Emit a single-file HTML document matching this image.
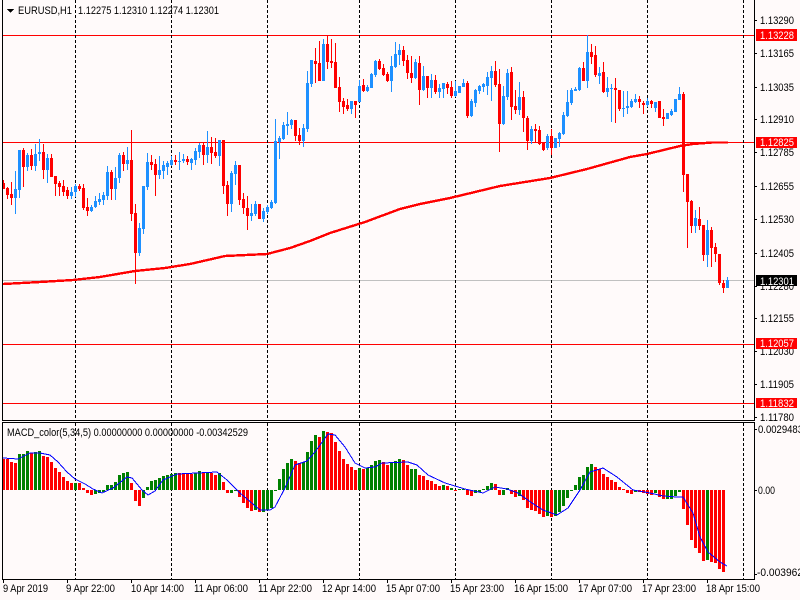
<!DOCTYPE html>
<html>
<head>
<meta charset="utf-8">
<title>EURUSD,H1</title>
<style>
html,body{margin:0;padding:0;background:#fffafa;width:800px;height:600px;overflow:hidden}
svg{display:block;position:absolute;left:0;top:0}
text{font-family:"Liberation Sans",sans-serif;font-size:11px;fill:#000}
</style>
</head>
<body>
<svg width="800" height="600" viewBox="0 0 800 600" xmlns="http://www.w3.org/2000/svg" shape-rendering="crispEdges">
<rect width="800" height="600" fill="#fffafa"/>

<!-- horizontal lines -->
<path d="M3 35.5H754M3 142.5H754M3 344.5H754M3 403.5H754" stroke="#ff0000" stroke-width="1" fill="none"/>
<path d="M3 280.5H754" stroke="#c0c0c0" stroke-width="1" fill="none"/>

<!-- vertical dashed separators -->
<path d="M75.5 0V420M171.5 0V420M267.5 0V420M359.5 0V420M455.5 0V420M551.5 0V420M647.5 0V420M743.5 0V420M75.5 423V579M171.5 423V579M267.5 423V579M359.5 423V579M455.5 423V579M551.5 423V579M647.5 423V579M743.5 423V579" stroke="#000" stroke-width="1" stroke-dasharray="3 2" fill="none"/>

<!-- blue wicks -->
<path fill="none" stroke="#1e90ff" stroke-width="1" d="M15.5 171V214M19.5 150V198M27.5 153V171M35.5 144V171M39.5 139V161M47.5 154V183M71.5 187V199M75.5 184V197M91.5 205V212M95.5 196V208M99.5 193V205M103.5 192V205M107.5 166V200M115.5 167V200M119.5 153V183M127.5 147V170M139.5 223V256M143.5 186V234M147.5 153V190M159.5 156V179M163.5 161V179M167.5 161V175M171.5 156V166M179.5 152V170M183.5 154V163M191.5 158V170M195.5 148V165M199.5 143V158M207.5 131V163M219.5 140V166M231.5 171V212M235.5 161V185M251.5 204V221M255.5 201V216M263.5 208V222M267.5 205V214M271.5 200V209M275.5 119V204M279.5 136V159M283.5 122V140M287.5 112V135M291.5 119V129M303.5 124V147M307.5 71V132M311.5 60V87M323.5 39V81M351.5 101V114M359.5 80V102M367.5 85V92M371.5 73V88M375.5 60V77M391.5 56V92M395.5 42V68M399.5 44V65M415.5 59V79M423.5 66V91M431.5 74V98M439.5 84V98M443.5 83V98M455.5 81V97M459.5 86V93M463.5 79V87M471.5 99V117M475.5 89V107M479.5 85V94M483.5 83V92M487.5 72V95M491.5 66V101M503.5 86V125M507.5 69V100M519.5 82V115M531.5 126V144M547.5 134V150M555.5 138V148M559.5 132V147M563.5 112V135M567.5 90V117M571.5 88V105M575.5 87V91M579.5 67V91M587.5 35V88M599.5 67V84M607.5 77V97M611.5 84V122M623.5 91V117M627.5 91V114M631.5 99V108M635.5 94V103M647.5 98V107M655.5 102V112M667.5 113V119M671.5 109V116M675.5 99V112M679.5 87V100M695.5 210V233M707.5 220V267M727.5 277V288"/>
<!-- blue bodies -->
<path fill="none" stroke="#1e90ff" stroke-width="3" d="M15.5 189V198M19.5 150V190M27.5 155V167M35.5 154V166M39.5 152V154M47.5 158V170M71.5 192V196M75.5 186V192M91.5 207V211M95.5 201V207M99.5 199V202M103.5 195V200M107.5 172V196M115.5 178V189M119.5 155V178M127.5 160V164M139.5 228V253M143.5 186V229M147.5 162V187M159.5 170V175M163.5 165V171M167.5 163V167M171.5 160V165M179.5 161V162M183.5 159V161M191.5 159V163M195.5 151V160M199.5 145V152M207.5 147V155M219.5 140V156M231.5 173V204M235.5 165V174M251.5 213V216M255.5 204V214M263.5 211V219M267.5 207V212M271.5 202V208M275.5 141V203M279.5 138V142M283.5 125V139M287.5 124V126M291.5 120V125M303.5 128V141M307.5 83V129M311.5 60V84M323.5 44V81M351.5 101V109M359.5 86V102M367.5 87V91M371.5 74V88M375.5 61V75M391.5 66V81M395.5 54V67M399.5 50V55M415.5 62V78M423.5 76V90M431.5 80V88M439.5 88V92M443.5 83V89M455.5 91V96M459.5 86V93M463.5 83V87M471.5 101V116M475.5 90V103M479.5 86V91M483.5 84V87M487.5 77V86M491.5 71V78M503.5 96V124M507.5 73V97M519.5 97V110M531.5 129V141M547.5 136V148M555.5 138V148M559.5 133V139M563.5 115V134M567.5 102V116M571.5 90V103M575.5 89V91M579.5 68V90M587.5 52V81M599.5 73V76M607.5 88V92M611.5 88V89M623.5 108V109M627.5 106V108M631.5 101V107M635.5 99V102M647.5 101V105M655.5 102V108M667.5 113V119M671.5 111V115M675.5 99V112M679.5 94V100M695.5 218V226M707.5 230V255M727.5 280V288"/>
<!-- red wicks -->
<path fill="none" stroke="#ff0000" stroke-width="1" d="M3.5 180V189M7.5 187V199M11.5 182V205M23.5 148V187M31.5 149V170M43.5 144V179M51.5 154V177M55.5 176V196M59.5 181V196M63.5 180V196M67.5 187V199M79.5 184V191M83.5 184V210M87.5 198V216M111.5 170V200M123.5 152V171M131.5 130V221M135.5 204V284M151.5 155V170M155.5 159V196M175.5 155V165M187.5 156V165M203.5 143V165M211.5 137V164M215.5 138V158M223.5 140V194M227.5 181V216M239.5 165V205M243.5 193V214M247.5 196V230M259.5 204V219M295.5 120V141M299.5 128V145M315.5 48V83M319.5 41V81M327.5 35V69M331.5 39V68M335.5 43V88M339.5 77V112M343.5 98V114M347.5 99V111M355.5 101V118M363.5 79V92M379.5 59V70M383.5 64V76M387.5 72V82M403.5 46V66M407.5 55V79M411.5 56V83M419.5 56V105M427.5 76V98M435.5 75V94M447.5 82V94M451.5 81V98M467.5 81V118M495.5 61V87M499.5 69V152M511.5 67V120M515.5 90V114M523.5 91V132M527.5 116V150M535.5 124V142M539.5 126V145M543.5 142V151M551.5 129V155M583.5 62V81M591.5 44V64M595.5 46V77M603.5 62V93M615.5 78V123M619.5 90V111M639.5 96V108M643.5 101V114M651.5 100V108M659.5 101V118M663.5 109V126M683.5 92V192M687.5 174V248M691.5 200V233M699.5 207V230M703.5 225V261M711.5 227V267M715.5 243V262M719.5 254V285M723.5 280V293"/>
<!-- red bodies -->
<path fill="none" stroke="#ff0000" stroke-width="3" d="M3.5 183V189M7.5 188V195M11.5 194V198M23.5 150V167M31.5 155V166M43.5 152V170M51.5 158V177M55.5 176V184M59.5 183V187M63.5 186V192M67.5 190V196M79.5 186V189M83.5 188V208M87.5 207V211M111.5 172V189M123.5 155V164M131.5 160V214M135.5 213V253M151.5 162V165M155.5 164V175M175.5 160V162M187.5 159V162M203.5 145V155M211.5 147V153M215.5 152V156M223.5 140V186M227.5 185V204M239.5 165V200M243.5 199V208M247.5 208V216M259.5 204V219M295.5 120V136M299.5 135V141M315.5 61V64M319.5 63V81M327.5 44V62M331.5 61V63M335.5 62V88M339.5 87V102M343.5 101V107M347.5 105V109M355.5 101V105M363.5 85V91M379.5 61V69M383.5 68V75M387.5 74V81M403.5 50V61M407.5 60V73M411.5 73V78M419.5 63V90M427.5 76V88M435.5 80V92M447.5 84V88M451.5 87V96M467.5 83V116M495.5 71V85M499.5 84V124M511.5 72V107M515.5 106V110M523.5 97V118M527.5 118V141M535.5 129V131M539.5 130V144M543.5 142V150M551.5 136V148M583.5 68V81M591.5 52V57M595.5 55V75M603.5 72V92M615.5 88V90M619.5 90V109M639.5 99V102M643.5 103V105M651.5 101V104M659.5 101V118M663.5 117V119M683.5 94V175M687.5 174V202M691.5 201V226M699.5 219V226M703.5 225V255M711.5 230V248M715.5 247V254M719.5 254V283M723.5 283V288"/>

<!-- moving average -->
<polyline fill="none" stroke="#ff0000" stroke-width="2.4" points="3,284 40,282 73,280 100,277 135,271 165,268 190,264 225,256 267,254 290,248 310,241 330,233 365,222 400,209 420,204 450,198 500,186 550,178 587,169 630,157 647,154 680,146 693,144 712,142.5 728,142.5"/>

<!-- MACD green bars -->
<path fill="none" stroke="#008000" stroke-width="3" d="M19.5 454V490M23.5 454V490M27.5 451V490M35.5 452V490M39.5 451V490M75.5 483V490M95.5 490V494M99.5 490V493M103.5 490V492M107.5 485V490M111.5 485V490M115.5 482V490M119.5 475V490M123.5 473V490M127.5 472V490M143.5 490V498M147.5 487V490M151.5 481V490M155.5 480V490M159.5 478V490M163.5 476V490M167.5 475V490M171.5 474V490M175.5 473V490M195.5 473V490M199.5 471V490M207.5 473V490M219.5 473V490M231.5 490V493M235.5 490V491M255.5 490V510M263.5 490V512M267.5 490V510M271.5 490V508M275.5 490V491M279.5 479V490M283.5 469V490M287.5 463V490M291.5 459V490M303.5 462V490M307.5 452V490M311.5 441V490M315.5 435V490M323.5 431V490M359.5 468V490M367.5 468V490M371.5 465V490M375.5 461V490M379.5 460V490M391.5 462V490M395.5 461V490M399.5 459V490M411.5 469V490M415.5 469V490M443.5 485V490M451.5 488V490M459.5 489V490M463.5 489V490M475.5 490V493M479.5 490V492M483.5 489V490M487.5 486V490M491.5 483V490M503.5 490V495M507.5 488V490M519.5 490V496M547.5 490V516M555.5 490V516M559.5 490V512M563.5 490V506M567.5 490V498M571.5 490V491M575.5 485V490M579.5 477V490M583.5 475V490M587.5 467V490M591.5 464V490M635.5 490V492M655.5 490V493M667.5 490V499M671.5 490V499M675.5 490V496M679.5 490V492M707.5 490V560"/>
<!-- MACD red bars -->
<path fill="none" stroke="#ff0000" stroke-width="3" d="M3.5 459V490M7.5 459V490M11.5 462V490M15.5 463V490M31.5 453V490M43.5 456V490M47.5 457V490M51.5 462V490M55.5 468V490M59.5 472V490M63.5 477V490M67.5 481V490M71.5 483V490M79.5 483V490M83.5 488V490M87.5 490V493M91.5 490V495M131.5 483V490M135.5 490V501M139.5 490V506M179.5 473V490M183.5 473V490M187.5 474V490M191.5 474V490M203.5 472V490M211.5 473V490M215.5 475V490M223.5 482V490M227.5 490V493M239.5 490V497M243.5 490V503M247.5 490V508M251.5 490V511M259.5 490V512M295.5 461V490M299.5 463V490M319.5 437V490M327.5 432V490M331.5 433V490M335.5 442V490M339.5 451V490M343.5 459V490M347.5 464V490M351.5 467V490M355.5 470V490M363.5 469V490M383.5 462V490M387.5 465V490M403.5 460V490M407.5 465V490M419.5 475V490M423.5 476V490M427.5 480V490M431.5 481V490M435.5 484V490M439.5 486V490M447.5 486V490M455.5 490V491M467.5 490V495M471.5 490V496M495.5 484V490M499.5 490V495M511.5 490V494M515.5 490V497M523.5 490V500M527.5 490V508M531.5 490V510M535.5 490V511M539.5 490V514M543.5 490V517M551.5 490V517M595.5 467V490M599.5 469V490M603.5 474V490M607.5 477V490M611.5 480V490M615.5 482V490M619.5 487V490M623.5 489V490M627.5 490V493M631.5 490V494M639.5 490V492M643.5 490V493M647.5 490V494M651.5 490V495M659.5 490V497M663.5 490V499M683.5 490V509M687.5 490V525M691.5 490V540M695.5 490V548M699.5 490V553M703.5 490V561M711.5 490V562M715.5 490V563M719.5 490V569M723.5 490V572"/>
<!-- MACD signal -->
<polyline fill="none" stroke="#0000ff" stroke-width="1" points="3,458 18,459 30,453 40,453 50,455 58,462 67,472 75,479 85,484 93,489 102,493 113,488 127,477 132,478 142,490 148,495 155,491 163,480 177,474 217,472 227,480 240,493 260,510 270,510 275,507 285,488 295,465 307,461 315,452 328,434 335,435 345,447 355,463 365,468 375,467 382,463 408,462 417,465 428,475 445,483 465,489 483,493 495,487 507,489 518,493 532,503 543,510 557,515 568,508 580,490 590,472 603,468 617,477 633,490 650,493 663,496 677,497 683,497 693,513 700,537 708,552 720,562 727,566"/>

<!-- frame -->
<path d="M2.5 0V420M2.5 422V580M2 420.5H755M2 422.5H755M2 579.5H755M754.5 0V421M754.5 422V580" stroke="#000" stroke-width="1" fill="none"/>
<!-- price ticks -->
<path d="M755 20.5h2M755 53.5h2M755 87.5h2M755 119.5h2M755 152.5h2M755 186.5h2M755 219.5h2M755 253.5h2M755 286.5h2M755 318.5h2M755 351.5h2M755 384.5h2M755 417.5h2M755 429.5h2M755 490.5h2M755 574.5h2M3.5 580v3M67.5 580v3M131.5 580v3M195.5 580v3M259.5 580v3M323.5 580v3M387.5 580v3M451.5 580v3M515.5 580v3M579.5 580v3M643.5 580v3M707.5 580v3" stroke="#000" stroke-width="1" fill="none"/>

<!-- header -->
<polygon points="7,9 14,9 10.5,13" fill="#000"/>
<g shape-rendering="auto">
<text x="18" y="14" textLength="54" lengthAdjust="spacingAndGlyphs">EURUSD,H1</text>
<text x="78" y="14" textLength="141" lengthAdjust="spacingAndGlyphs">1.12275 1.12310 1.12274 1.12301</text>
<text x="7" y="436" textLength="241" lengthAdjust="spacingAndGlyphs">MACD_color(5,34,5) 0.00000000 0.00000000 -0.00342529</text>

<text x="760" y="24" textLength="34" lengthAdjust="spacingAndGlyphs">1.13290</text>
<text x="760" y="57" textLength="34" lengthAdjust="spacingAndGlyphs">1.13165</text>
<text x="760" y="91" textLength="34" lengthAdjust="spacingAndGlyphs">1.13035</text>
<text x="760" y="123" textLength="34" lengthAdjust="spacingAndGlyphs">1.12910</text>
<text x="760" y="156" textLength="34" lengthAdjust="spacingAndGlyphs">1.12785</text>
<text x="760" y="190" textLength="34" lengthAdjust="spacingAndGlyphs">1.12655</text>
<text x="760" y="223" textLength="34" lengthAdjust="spacingAndGlyphs">1.12530</text>
<text x="760" y="257" textLength="34" lengthAdjust="spacingAndGlyphs">1.12405</text>
<text x="760" y="290" textLength="34" lengthAdjust="spacingAndGlyphs">1.12280</text>
<text x="760" y="322" textLength="34" lengthAdjust="spacingAndGlyphs">1.12155</text>
<text x="760" y="355" textLength="34" lengthAdjust="spacingAndGlyphs">1.12030</text>
<text x="760" y="388" textLength="34" lengthAdjust="spacingAndGlyphs">1.11905</text>
<text x="760" y="421" textLength="34" lengthAdjust="spacingAndGlyphs">1.11780</text>

<rect x="756" y="29" width="41" height="12" fill="#ff0000" shape-rendering="crispEdges"/>
<text x="760" y="39" textLength="34" lengthAdjust="spacingAndGlyphs" style="fill:#fff">1.13228</text>
<rect x="756" y="137" width="41" height="11" fill="#ff0000" shape-rendering="crispEdges"/>
<text x="760" y="146" textLength="34" lengthAdjust="spacingAndGlyphs" style="fill:#fff">1.12825</text>
<rect x="756" y="275" width="41" height="11" fill="#000" shape-rendering="crispEdges"/>
<text x="760" y="285" textLength="34" lengthAdjust="spacingAndGlyphs" style="fill:#fff">1.12301</text>
<rect x="756" y="338" width="41" height="11" fill="#ff0000" shape-rendering="crispEdges"/>
<text x="760" y="347" textLength="34" lengthAdjust="spacingAndGlyphs" style="fill:#fff">1.12057</text>
<rect x="756" y="398" width="41" height="10" fill="#ff0000" shape-rendering="crispEdges"/>
<text x="760" y="407" textLength="34" lengthAdjust="spacingAndGlyphs" style="fill:#fff">1.11832</text>

<text x="758" y="433" textLength="45" lengthAdjust="spacingAndGlyphs">0.0029483</text>
<text x="758" y="494" textLength="17" lengthAdjust="spacingAndGlyphs">0.00</text>
<text x="757" y="576" textLength="46" lengthAdjust="spacingAndGlyphs">-0.003962</text>

<text x="3" y="592" textLength="45" lengthAdjust="spacingAndGlyphs">9 Apr 2019</text>
<text x="66" y="592" textLength="49" lengthAdjust="spacingAndGlyphs">9 Apr 22:00</text>
<text x="131" y="592" textLength="53" lengthAdjust="spacingAndGlyphs">10 Apr 14:00</text>
<text x="194" y="592" textLength="54" lengthAdjust="spacingAndGlyphs">11 Apr 06:00</text>
<text x="258" y="592" textLength="54" lengthAdjust="spacingAndGlyphs">11 Apr 22:00</text>
<text x="322" y="592" textLength="54" lengthAdjust="spacingAndGlyphs">12 Apr 14:00</text>
<text x="386" y="592" textLength="54" lengthAdjust="spacingAndGlyphs">15 Apr 07:00</text>
<text x="450" y="592" textLength="54" lengthAdjust="spacingAndGlyphs">15 Apr 23:00</text>
<text x="514" y="592" textLength="54" lengthAdjust="spacingAndGlyphs">16 Apr 15:00</text>
<text x="578" y="592" textLength="54" lengthAdjust="spacingAndGlyphs">17 Apr 07:00</text>
<text x="642" y="592" textLength="54" lengthAdjust="spacingAndGlyphs">17 Apr 23:00</text>
<text x="706" y="592" textLength="54" lengthAdjust="spacingAndGlyphs">18 Apr 15:00</text>
</g>
</svg>
</body>
</html>
